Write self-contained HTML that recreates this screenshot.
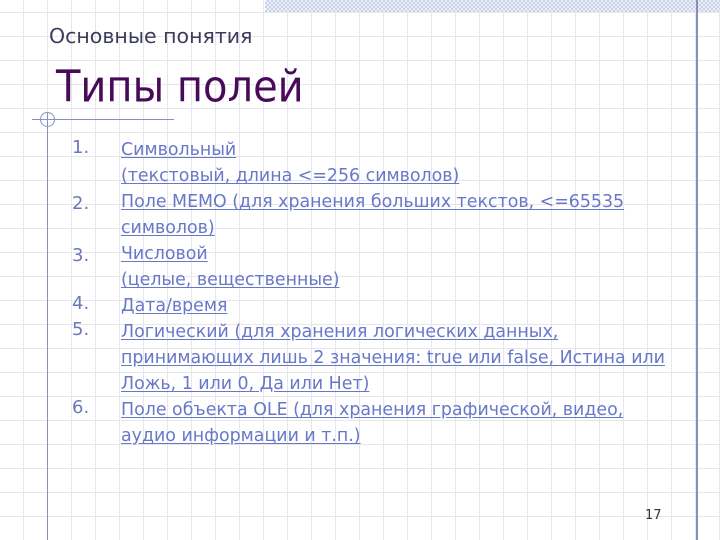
<!DOCTYPE html>
<html><head><meta charset="utf-8"><style>
html,body{margin:0;padding:0}
body{width:720px;height:540px;position:relative;overflow:hidden;background:#fff;font-family:"DejaVu Sans","Liberation Sans",sans-serif}
.grid{position:absolute;inset:0;
background-image:repeating-linear-gradient(90deg,transparent 0 23px,#e6e6ec 23px 24px),repeating-linear-gradient(0deg,transparent 0 23px,#e6e6ec 23px 24px)}
.band{position:absolute;left:265px;top:0;width:455px;height:12px;background:repeating-conic-gradient(#c8d0ea 0 25%,#eef0f8 0 50%) 0 0/4px 4px}
.vline{position:absolute;left:696px;top:0;width:2px;height:540px;background:#8890b8}
.lv{position:absolute;left:47px;top:112px;width:1px;height:428px;background:#8890c0}
.lh{position:absolute;left:32px;top:119px;width:142px;height:1px;background:#8890c0}
.circ{position:absolute;left:40px;top:112px;width:13px;height:13px;border:1px solid #8890c0;border-radius:50%}
.sub{position:absolute;left:49px;top:24px;font-size:20.5px;color:#3c3c5c}
.title{position:absolute;left:56px;top:62px;font-size:40px;color:#4a0a5a;transform:scaleY(1.1);transform-origin:left top}
.num{position:absolute;left:72px;font-size:18px;color:#6a78b8}
.items{position:absolute;left:121px;top:137px;font-size:17.4px;line-height:26px;color:#6878c8;width:590px}
.items div{text-decoration:underline;text-underline-offset:2px}
.pg{position:absolute;left:645px;top:508px;font-size:13px;color:#333}
</style></head><body>
<div class="grid"></div>
<div class="band"></div>
<div class="vline"></div>
<div class="lv"></div><div class="lh"></div><div class="circ"></div>
<div class="sub">Основные понятия</div>
<div class="title">Типы полей</div>
<div class="num" style="top:137px">1.</div>
<div class="num" style="top:193px">2.</div>
<div class="num" style="top:245px">3.</div>
<div class="num" style="top:293px">4.</div>
<div class="num" style="top:319px">5.</div>
<div class="num" style="top:397px">6.</div>
<div class="items">
<div>Символьный<br>(текстовый, длина &lt;=256 символов)</div>
<div>Поле МЕМО (для хранения больших текстов, &lt;=65535<br>символов)</div>
<div>Числовой<br>(целые, вещественные)</div>
<div>Дата/время</div>
<div>Логический (для хранения логических данных,<br>принимающих лишь 2 значения: true или false, Истина или<br>Ложь, 1 или 0, Да или Нет)</div>
<div>Поле объекта OLE (для хранения графической, видео,<br>аудио информации и т.п.)</div>
</div>
<div class="pg">17</div>
</body></html>
